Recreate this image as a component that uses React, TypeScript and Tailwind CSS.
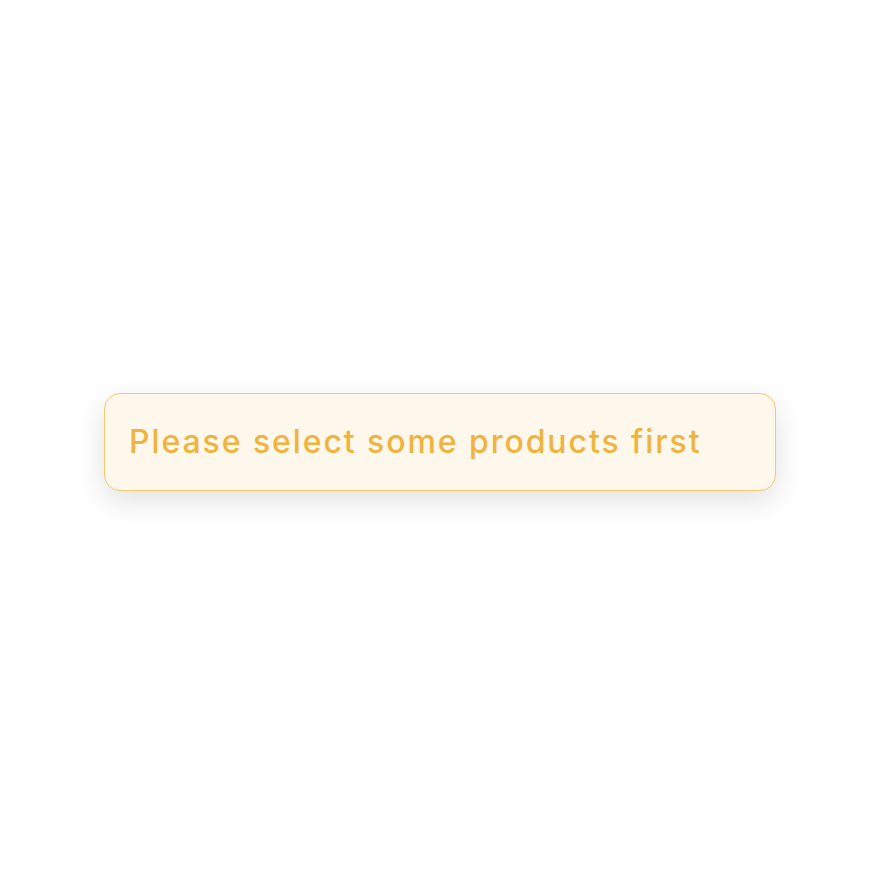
export default function App() {
  return (
    <div className="flex h-[884px] w-full items-center justify-center bg-white">
      <div className="mr-1 flex h-[98px] w-[672px] items-center rounded-2xl border border-[#f5ca6e] bg-[#fdf7ec] px-6 shadow-[0_10px_30px_rgba(0,0,0,0.12)]">
        <p className="font-['Inter',sans-serif] text-[32px] font-medium tracking-[0.06em] text-[#f0b43e]">
          Please select some products first
        </p>
      </div>
    </div>
  );
}
